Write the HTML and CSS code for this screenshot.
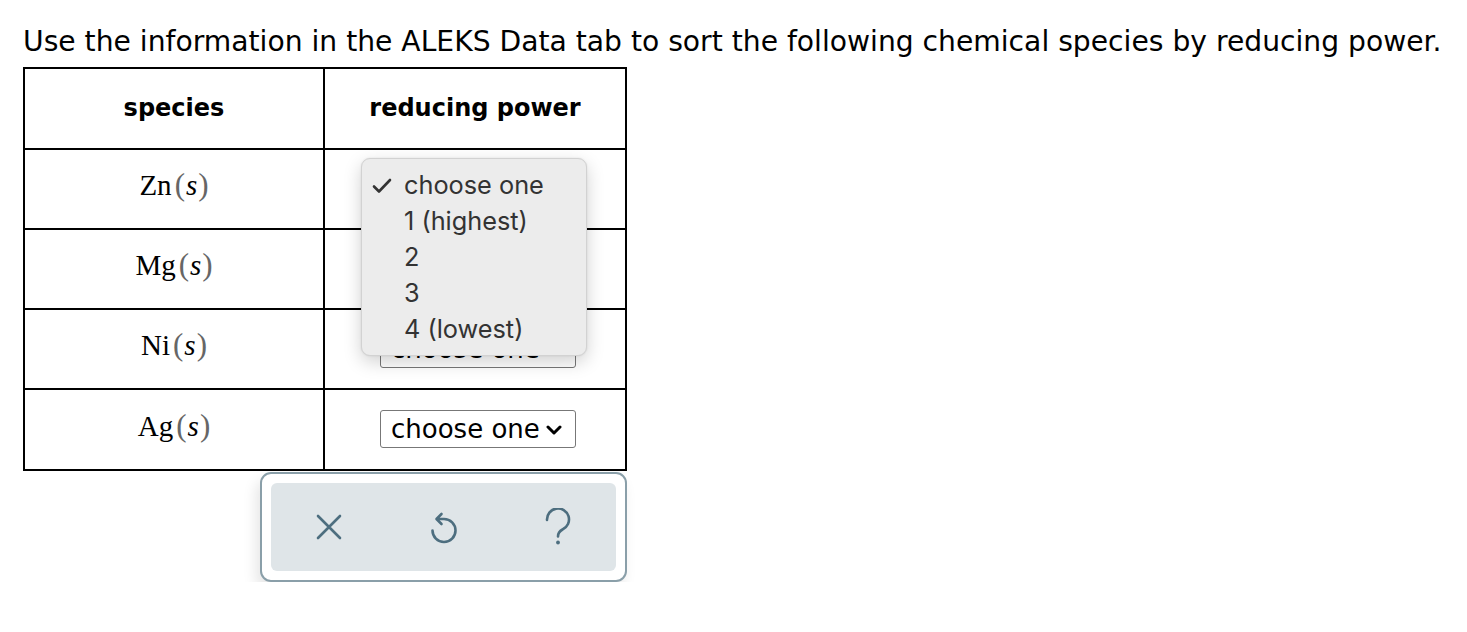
FILE: index.html
```html
<!DOCTYPE html>
<html>
<head>
<meta charset="utf-8">
<link rel="stylesheet" href="styles.css">
</head>
<body>
<div class="page">
  <p class="prompt">Use the information in the ALEKS Data tab to sort the following chemical species by reducing power.</p>
  <div class="work">
    <table class="grid">
      <tr class="head">
        <th>species</th>
        <th>reducing power</th>
      </tr>
      <tr>
        <td class="sp">Zn<span class="paren">(</span><i>s</i><span class="paren">)</span></td>
        <td><div class="sel">choose one<svg class="chev" viewBox="0 0 16 11" width="16" height="11"><path d="M2 2 L8 8 L14 2" fill="none" stroke="#000" stroke-width="3" stroke-linecap="round" stroke-linejoin="round"/></svg></div></td>
      </tr>
      <tr>
        <td class="sp">Mg<span class="paren">(</span><i>s</i><span class="paren">)</span></td>
        <td><div class="sel">choose one<svg class="chev" viewBox="0 0 16 11" width="16" height="11"><path d="M2 2 L8 8 L14 2" fill="none" stroke="#000" stroke-width="3" stroke-linecap="round" stroke-linejoin="round"/></svg></div></td>
      </tr>
      <tr>
        <td class="sp">Ni<span class="paren">(</span><i>s</i><span class="paren">)</span></td>
        <td><div class="sel">choose one<svg class="chev" viewBox="0 0 16 11" width="16" height="11"><path d="M2 2 L8 8 L14 2" fill="none" stroke="#000" stroke-width="3" stroke-linecap="round" stroke-linejoin="round"/></svg></div></td>
      </tr>
      <tr class="last">
        <td class="sp">Ag<span class="paren">(</span><i>s</i><span class="paren">)</span></td>
        <td><div class="sel">choose one<svg class="chev" viewBox="0 0 16 11" width="16" height="11"><path d="M2 2 L8 8 L14 2" fill="none" stroke="#000" stroke-width="3" stroke-linecap="round" stroke-linejoin="round"/></svg></div></td>
      </tr>
    </table>

    <ul class="popup">
      <li class="checked"><svg class="tick" viewBox="0 0 20 16" width="20" height="16"><path d="M2 8.5 L7 13.5 L18 2" fill="none" stroke="#333" stroke-width="2.6" stroke-linecap="round" stroke-linejoin="round"/></svg>choose one</li>
      <li>1 (highest)</li>
      <li>2</li>
      <li>3</li>
      <li>4 (lowest)</li>
    </ul>

    <div class="actions">
      <div class="inner">
        <button class="btn" aria-label="clear">
          <svg viewBox="0 0 26 26" width="26" height="26"><path d="M2 2 L24 24 M24 2 L2 24" fill="none" stroke="#4d6e7f" stroke-width="2.6" stroke-linecap="round"/></svg>
        </button>
        <button class="btn" aria-label="undo">
          <svg viewBox="0 0 32 34" width="32" height="34"><path d="M4.5 20.5 A 11.5 11.5 0 1 0 16 9 L 9 9 M 13.5 4 L 8.5 9 L 13.5 14" fill="none" stroke="#4d6e7f" stroke-width="2.6" stroke-linecap="round" stroke-linejoin="round"/></svg>
        </button>
        <button class="btn" aria-label="help">
          <svg viewBox="0 0 30 38" width="30" height="38"><path d="M3 12 A 11 11 0 1 1 18.5 21.5 Q 14 24 14 28.5" fill="none" stroke="#4d6e7f" stroke-width="2.6" stroke-linecap="round"/><circle cx="14" cy="34.5" r="1.9" fill="#4d6e7f"/></svg>
        </button>
      </div>
    </div>
  </div>
</div>
</body>
</html>
```

FILE: styles.css
```css
html, body {
  margin: 0;
  padding: 0;
  background: #fff;
}

.page {
  padding: 24px 0 0 23px;
  font-family: "DejaVu Sans", Verdana, sans-serif;
  color: #000;
}

.prompt {
  margin: 0;
  font-size: 28.2px;
  line-height: 36px;
  white-space: nowrap;
}

.work {
  position: relative;
  width: 604px;
  margin-top: 7px;
}

.grid {
  border-collapse: collapse;
  width: 604px;
  table-layout: fixed;
}

.grid th,
.grid td {
  border: 2px solid #000;
  text-align: center;
  padding: 0;
  vertical-align: middle;
}

.grid th:first-child,
.grid td:first-child {
  width: 298px;
}

.grid tr {
  height: 80px;
}

.grid tr.head {
  height: 81px;
}

.grid tr.last {
  height: 81px;
}

.grid th {
  font-size: 24px;
  font-weight: bold;
  padding-bottom: 2px;
}

.sp {
  font-family: "Liberation Serif", "Times New Roman", serif;
  font-size: 29px;
  padding-bottom: 8px !important;
}

.sp i {
  font-style: italic;
  padding: 0 1px;
}

.paren {
  color: #666;
  font-size: 31px;
  padding-left: 3px;
}

.paren + i + .paren {
  padding-left: 0;
}

.sel {
  display: inline-flex;
  align-items: center;
  box-sizing: border-box;
  width: 196px;
  height: 38px;
  padding: 0 6px 0 10px;
  border: 1px solid #777;
  border-radius: 3px;
  background: #fff;
  font-size: 26px;
  gap: 6px;
  white-space: nowrap;
  margin: 0 0 1px 6px;
}

.chev {
  flex: none;
  margin-top: 3px;
}

.popup {
  position: absolute;
  left: 338px;
  top: 91px;
  width: 226px;
  box-sizing: border-box;
  margin: 0;
  padding: 8px 0;
  list-style: none;
  background: #ececec;
  border: 1px solid #d2d2d2;
  border-radius: 9px;
  box-shadow: 0 6px 18px rgba(0, 0, 0, 0.18), 0 0 2px rgba(0, 0, 0, 0.1);
  font-family: Inter, "Liberation Sans", sans-serif;
  font-size: 25.3px;
  color: #333;
}

.popup li {
  height: 36px;
  line-height: 36px;
  padding-left: 42px;
  position: relative;
}

.tick {
  position: absolute;
  left: 10px;
  top: 11px;
}

.actions {
  margin: 1px 0 0 auto;
  width: 367px;
  height: 110px;
  box-sizing: border-box;
  border: 2px solid #8a9fa9;
  border-radius: 11px;
  background: #fff;
  padding: 9px;
  box-shadow: -4px 8px 14px rgba(0, 0, 0, 0.10);
}

.inner {
  display: flex;
  height: 100%;
  background: #dfe5e8;
  border-radius: 6px;
}

.btn {
  flex: 1;
  display: flex;
  align-items: center;
  justify-content: center;
  border: 0;
  background: transparent;
  padding: 0;
  margin: 0;
  cursor: pointer;
}
```
